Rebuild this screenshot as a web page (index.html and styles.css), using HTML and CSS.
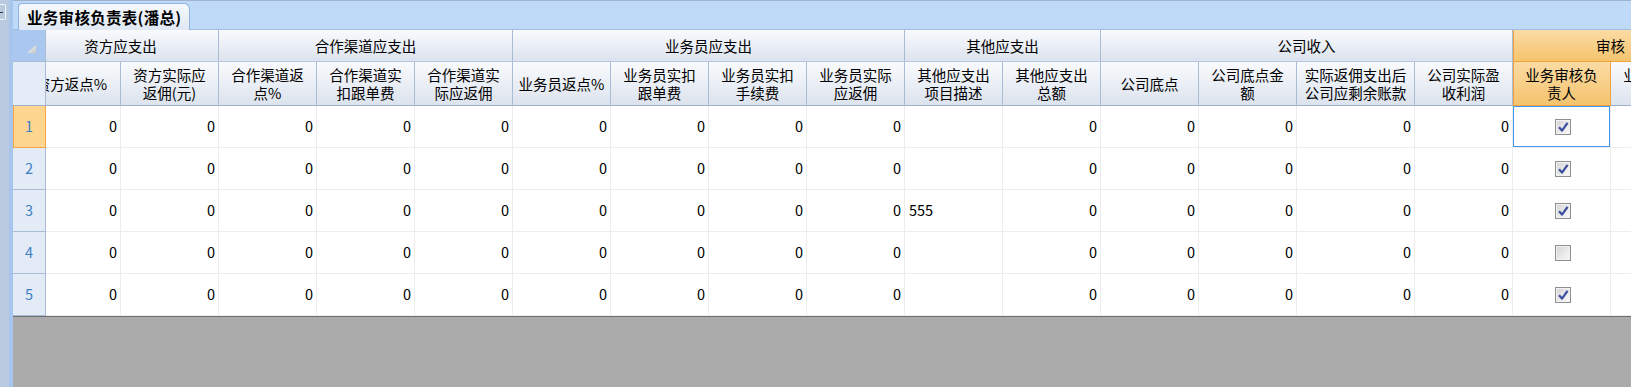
FILE: index.html
```html
<!DOCTYPE html>
<html lang="zh-CN">
<head>
  <meta charset="UTF-8" />
  <title>业务审核负责表(潘总)</title>
  <link rel="stylesheet" href="styles.css">
</head>
<body>
  <div class="app">
    <div class="side"><span class="pin"><i class="dash"></i></span></div>
    <div class="splitter"></div>
    <div class="main">
      <div class="tabbar">
        <div class="tab">业务审核负责表(潘总)</div>
      </div>

      <div class="grid">
        <!-- fixed row header column -->
        <div class="rowheads" id="rowheads">
          <div class="corner"><span class="tri"></span></div>
          <div class="rh-blank"></div>
        </div>

        <!-- scrolled sheet -->
        <div class="viewport">
          <div class="sheet" id="sheet">
            <div class="gh span2">资方应支出</div>
            <div class="gh span3">合作渠道应支出</div>
            <div class="gh span4">业务员应支出</div>
            <div class="gh span2">其他应支出</div>
            <div class="gh span4">公司收入</div>
            <div class="gh span2 hot">审核</div>

            <div class="ch">资方返点%</div>
            <div class="ch">资方实际应<br>返佣(元)</div>
            <div class="ch">合作渠道返<br>点%</div>
            <div class="ch">合作渠道实<br>扣跟单费</div>
            <div class="ch">合作渠道实<br>际应返佣</div>
            <div class="ch">业务员返点%</div>
            <div class="ch">业务员实扣<br>跟单费</div>
            <div class="ch">业务员实扣<br>手续费</div>
            <div class="ch">业务员实际<br>应返佣</div>
            <div class="ch">其他应支出<br>项目描述</div>
            <div class="ch">其他应支出<br>总额</div>
            <div class="ch">公司底点</div>
            <div class="ch">公司底点金<br>额</div>
            <div class="ch">实际返佣支出后<br>公司应剩余账款</div>
            <div class="ch">公司实际盈<br>收利润</div>
            <div class="ch hot">业务审核负<br>责人</div>
            <div class="ch">业务经理负<br>责人</div>
          </div>
        </div>
      </div>

      <div class="empty"></div>
    </div>
  </div>

  <script>
    const rows = [
      { desc: "", ok: true },
      { desc: "", ok: true },
      { desc: "555", ok: true },
      { desc: "", ok: false },
      { desc: "", ok: true }
    ];

    const tick = '<svg viewBox="0 0 14 14" width="14" height="14"><path d="M3 7.2 L6 10.6 L11.6 2.8" fill="none" stroke="#3b4e9e" stroke-width="2.2" stroke-linejoin="round"/></svg>';

    const sheet = document.getElementById("sheet");
    const heads = document.getElementById("rowheads");

    rows.forEach((r, i) => {
      const rh = document.createElement("div");
      rh.className = "rh" + (i === 0 ? " sel" : "");
      rh.textContent = i + 1;
      heads.appendChild(rh);

      let html = "";
      for (let c = 0; c < 9; c++) html += '<div class="c num">0</div>';
      html += '<div class="c txt">' + r.desc + '</div>';
      for (let c = 0; c < 5; c++) html += '<div class="c num">0</div>';
      html += '<div class="c chk' + (i === 0 ? ' cur' : '') + '"><span class="box">' + (r.ok ? tick : '') + '</span></div>';
      html += '<div class="c"></div>';
      sheet.insertAdjacentHTML("beforeend", html);
    });
  </script>
</body>
</html>
```

FILE: styles.css
```css
html, body {
  margin: 0;
  padding: 0;
  height: 100%;
}
body {
  font-family: "Noto Sans CJK SC", "Noto Sans", sans-serif;
  font-size: 14.5px;
  color: #000;
  background: #ababab;
  overflow: hidden;
}
.app {
  display: flex;
  height: 100vh;
}
.side {
  width: 9px;
  background: #b9c9df;
  flex: none;
}
.pin {
  display: flex;
  align-items: center;
  width: 6px;
  height: 16px;
  margin-top: 4px;
  box-sizing: border-box;
  border: 1px solid #f3f6fb;
  border-left: none;
  border-radius: 0 2px 2px 0;
}
.dash {
  display: block;
  width: 3px;
  height: 1px;
  background: #333;
}
.splitter {
  width: 4px;
  background: #a7c5ed;
  flex: none;
}
.main {
  flex: 1;
  min-width: 0;
  display: flex;
  flex-direction: column;
}

/* tab strip */
.tabbar {
  height: 30px;
  box-sizing: border-box;
  background: #bfdaf9;
  border-top: 1px solid #9fb3cc;
  border-bottom: 1px solid #a3bde0;
  padding: 2px 0 0 5px;
  display: flex;
  align-items: flex-end;
  flex: none;
}
.tab {
  height: 27px;
  box-sizing: border-box;
  margin-bottom: -1px;
  padding: 3px 7px 0 8px;
  border: 1px solid #8fb3e1;
  border-bottom: none;
  border-radius: 4px 6px 0 0;
  background: linear-gradient(#f6f9fd, #dfe8f3);
  font-size: 15.5px;
  font-weight: bold;
  line-height: 20px;
  letter-spacing: 0.3px;
}

/* grid */
.grid {
  display: flex;
  flex: none;
}
.rowheads {
  width: 33px;
  flex: none;
  display: grid;
  grid-template-rows: 32px 44px repeat(5, 42px);
}
.rowheads > div {
  box-sizing: border-box;
  border-right: 1px solid #a9bcd5;
  border-bottom: 1px solid #a9bcd5;
}
.corner {
  background: #aac8ef;
  display: flex;
  justify-content: flex-end;
  align-items: flex-end;
  padding: 0 9px 8px 0;
}
.tri {
  width: 9px;
  height: 8px;
  background: linear-gradient(135deg, #ffffff, #c4c4c4);
  clip-path: polygon(100% 0, 100% 100%, 0 100%);
}
.rowheads .rh-blank {
  background: #e4ecf8;
  border-bottom-color: #9db1cb;
}
.rh {
  background: #e3ebf6;
  color: #3f7fc4;
  display: flex;
  align-items: center;
  justify-content: center;
  line-height: 1;
}
.rowheads .rh.sel {
  background: #fed68f;
  border-color: #f4a443;
  box-shadow: inset 1px 0 0 #f4a443;
}

.viewport {
  flex: 1;
  min-width: 0;
  overflow: hidden;
}
.sheet {
  display: grid;
  grid-template-columns: repeat(13, 98px) 118px 98px 98px 98px;
  grid-template-rows: 32px 44px repeat(5, 42px);
  width: max-content;
  margin-left: -23px;
}
.sheet > div {
  box-sizing: border-box;
  border-right: 1px solid #a9bcd5;
  border-bottom: 1px solid #a9bcd5;
}
.gh, .ch {
  background: linear-gradient(#f9fafd, #dce3ee);
  display: flex;
  align-items: center;
  justify-content: center;
  text-align: center;
  line-height: 18px;
  white-space: nowrap;
}
.span2 { grid-column: span 2; }
.span3 { grid-column: span 3; }
.span4 { grid-column: span 4; }
.sheet > .gh {
  border-bottom-color: #b6c6dc;
}
.sheet > .ch {
  border-bottom-color: #9db1cb;
  padding-top: 1px;
}
.sheet > .hot {
  background: linear-gradient(#fbdba4, #f4c46e);
  border-color: #f1a23c;
  box-shadow: inset 1px 0 0 #f1a23c;
}

.sheet > .c {
  background: #fff;
  border-right-color: #ececec;
  border-bottom-color: #ececec;
  display: flex;
  align-items: center;
  padding: 0 3px 0 4px;
  line-height: 1;
}
.num { justify-content: flex-end; }
.txt { justify-content: flex-start; }
.chk { justify-content: center; }
.sheet > .cur {
  box-shadow: inset 0 0 0 1px #3f97ef;
}
.box {
  width: 16px;
  height: 16px;
  box-sizing: border-box;
  border: 1px solid #8f8f8f;
  background: linear-gradient(135deg, #d4d4d4, #fafafa);
  box-shadow: inset 0 0 0 1px #f2f2f2;
  display: flex;
  align-items: center;
  justify-content: center;
  margin-left: 1px;
}
.box svg { display: block; }

.empty {
  flex: 1;
  background: #ababab;
  border-top: 1px solid #6e6e6e;
}
```
